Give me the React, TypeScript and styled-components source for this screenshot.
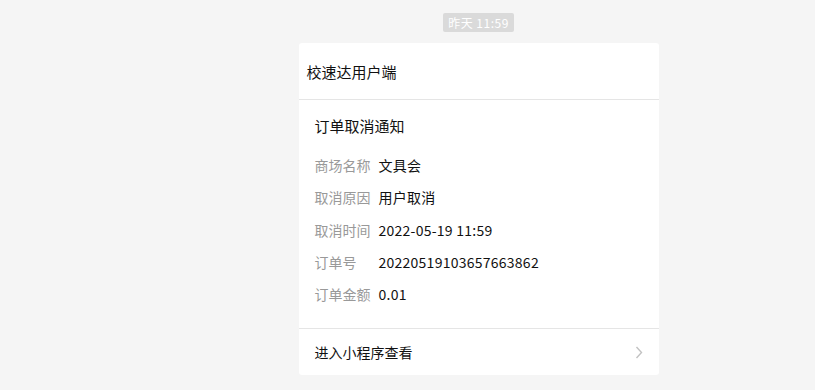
import React from "react";
import styled, { createGlobalStyle } from "styled-components";

const Global = createGlobalStyle`
  html, body { margin: 0; padding: 0; background: #f5f5f5; }
  body { font-family: "Microsoft YaHei", "Noto Sans CJK SC", "Noto Sans", sans-serif; }
`;

const Page = styled.div`
  width: 815px;
  height: 390px;
  display: flex;
  flex-direction: column;
  align-items: center;
  padding: 13px 0 0 142px;
  box-sizing: border-box;
`;

const TimeBadge = styled.div`
  height: 19px;
  padding: 0 5px;
  background: #dadada;
  color: #fff;
  font-size: 12px;
  line-height: 19px;
  letter-spacing: 0.5px;
  border-radius: 2px;
`;

const Card = styled.div`
  margin-top: 11px;
  width: 360px;
  background: #fff;
  border-radius: 3px;
  display: flex;
  flex-direction: column;
`;

const Header = styled.div`
  height: 56px;
  display: flex;
  align-items: center;
  padding-left: 8px;
  font-size: 15px;
  color: #111;
  border-bottom: 1px solid #e5e5e5;
`;

const Body = styled.div`
  padding: 15px 16px 18px;
  border-bottom: 1px solid #e5e5e5;
`;

const Title = styled.div`
  font-size: 15px;
  line-height: 22px;
  color: #111;
  margin-bottom: 12px;
`;

const Row = styled.div`
  display: flex;
  height: 32.25px;
  align-items: center;
  font-size: 14px;
`;

const Label = styled.span`
  width: 64px;
  flex-shrink: 0;
  color: #999;
`;

const Value = styled.span`
  color: #111;
  letter-spacing: 0.25px;
`;

const Footer = styled.div`
  height: 46px;
  display: flex;
  align-items: center;
  justify-content: space-between;
  padding: 0 16px;
  font-size: 14px;
  color: #111;
`;

const Chevron = styled.svg`
  width: 8px;
  height: 13px;
`;

const rows: [string, string][] = [
  ["商场名称", "文具会"],
  ["取消原因", "用户取消"],
  ["取消时间", "2022-05-19 11:59"],
  ["订单号", "20220519103657663862"],
  ["订单金额", "0.01"],
];

export default function App() {
  return (
    <>
      <Global />
      <Page>
        <TimeBadge>昨天 11:59</TimeBadge>
        <Card>
          <Header>校速达用户端</Header>
          <Body>
            <Title>订单取消通知</Title>
            {rows.map(([l, v]) => (
              <Row key={l}>
                <Label>{l}</Label>
                <Value>{v}</Value>
              </Row>
            ))}
          </Body>
          <Footer>
            <span>进入小程序查看</span>
            <Chevron viewBox="0 0 8 13">
              <path d="M1.5 1 L6.5 6.5 L1.5 12" fill="none" stroke="#c2c2c2" strokeWidth="1.4" />
            </Chevron>
          </Footer>
        </Card>
      </Page>
    </>
  );
}
